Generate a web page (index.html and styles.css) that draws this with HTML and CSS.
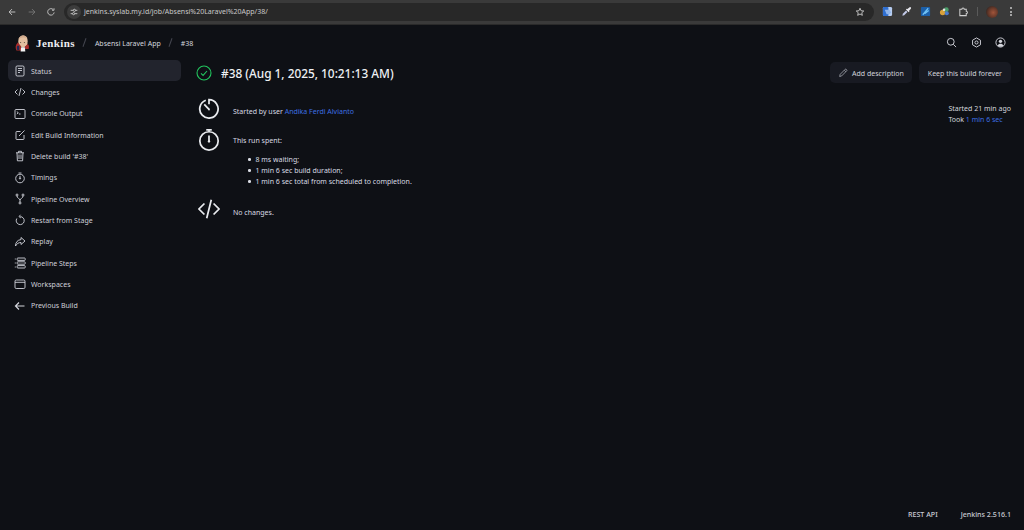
FILE: index.html
```html
<!DOCTYPE html>
<html lang="en">
<head>
<meta charset="utf-8">
<title>Jenkins #38</title>
<link rel="stylesheet" href="styles.css">
</head>
<body>
<div class="chrome">
  <div class="nav-icons">
    <svg class="cicon" viewBox="0 0 12 12"><path d="M10 6H2.500M6 2.500 2.500 6 6 9.500"/></svg>
    <svg class="cicon dim" viewBox="0 0 12 12"><path d="M2 6h7.500M6 2.500 9.500 6 6 9.500"/></svg>
    <svg class="cicon" viewBox="0 0 12 12"><path d="M9.800 6.500A3.900 3.900 0 1 1 8.600 3M9.600 1.500v2.400H7.200"/></svg>
  </div>
  <div class="omnibox">
    <span class="tune"><svg viewBox="0 0 12 12"><path d="M2 4h3M8 4h2M2 8h2M7 8h3"/><circle cx="6.500" cy="4" r="1.300"/><circle cx="5.500" cy="8" r="1.300"/></svg></span>
    <span class="url">jenkins.syslab.my.id/job/Absensi%20Laravel%20App/38/</span>
    <svg class="star" viewBox="0 0 12 12"><path d="m6 1.500 1.300 3 3.200.3-2.400 2.100.7 3.100L6 8.400 3.200 10l.7-3.100-2.400-2.100 3.200-.3z"/></svg>
  </div>
  <div class="extensions">
    <svg class="ext" viewBox="0 0 12 12"><rect x="1" y="1" width="10" height="10" rx="1.500" fill="#b7cdf0"/><rect x="1" y="1" width="6" height="10" rx="1" fill="#2f6fd0"/><path d="M3 4h5l2 3-2 2H5z" fill="#8fb4ea"/></svg>
    <svg class="ext" viewBox="0 0 12 12"><path d="M9.800 1.200a1.300 1.300 0 0 1 1 1.900L8.800 5.200l.4.900-.8.600-3-3 .7-.8.900.4z" fill="#e8e8ee"/><path d="M5.500 5 2 8.500 1.500 10.500l2-.5L7 6.500z" fill="#c2c9e8"/></svg>
    <svg class="ext" viewBox="0 0 12 12"><rect x="1" y="1" width="10" height="10" rx="1" fill="#1c5fa8"/><path d="M3 9.500 9 2.500M5 8.500 9.500 5" stroke="#6fc1f5" stroke-width="1.400" fill="none"/></svg>
    <svg class="ext" viewBox="0 0 12 12"><circle cx="4" cy="7" r="3" fill="#d9a23b"/><circle cx="8" cy="4" r="2.600" fill="#4b9d6a"/><circle cx="8.500" cy="8" r="2.200" fill="#4a7bd0"/><circle cx="5.500" cy="4" r="1.400" fill="#e6e6e6"/></svg>
    <svg class="ext puzzle" viewBox="0 0 12 12"><path d="M2 3.500h2.200a1.300 1.300 0 0 1 2.600 0H9v2.200a1.300 1.300 0 0 1 0 2.600V10.500H2z"/></svg>
    <span class="sep"></span>
    <span class="avatar"></span>
    <span class="kebab"><i></i><i></i><i></i></span>
  </div>
</div>

<div class="page">
  <header class="jenkins-head">
    <div class="brand">
      <svg class="logo" viewBox="0 0 16 18">
        <path d="M3.500 7.500C3.500 3.500 5.500 1 8.500 1s5 2.500 5 6-1 4.500-2 5.500-2.500 1.500-4 1-4-2-4-6z" fill="#e3bfa0"/>
        <path d="M4 4C5.500 1.800 7 .9 9 1c2.200.2 3.800 1.500 4.200 3C11 2.800 7 2.800 4 4.800z" fill="#cfa98c"/>
        <path d="M5.500 8.500h1M9.500 8.500h1" stroke="#4a3a30" stroke-width=".9"/>
        <path d="M1.500 17c-1.500-3-1-6 1.500-8.500l3 3.500 1 5z" fill="#a92c2b"/>
        <path d="M2.500 12c-.8 1.500-.6 3 0 4.500h2L4.500 12z" fill="#1e2a55"/>
        <path d="M14.500 15.500c.8-2.500.3-4.500-1-5.500L10.500 13l-.5 2.500z" fill="#a92c2b"/>
        <path d="M6.500 13.500h4l.5 4.500H6z" fill="#f2f2f2"/>
      </svg>
      <span class="brand-name">Jenkins</span>
    </div>
    <span class="slash"></span>
    <a class="crumb">Absensi Laravel App</a>
    <span class="slash"></span>
    <a class="crumb">#38</a>
    <div class="head-actions">
      <svg class="hicon" viewBox="0 0 12 12"><circle cx="5.200" cy="5.200" r="3.700"/><path d="m8 8 3 3"/></svg>
      <svg class="hicon" viewBox="0 0 12 12"><path d="M6 1 10.300 3.500v5L6 11 1.700 8.500v-5z" stroke-linejoin="round"/><circle cx="6" cy="6" r="1.700"/></svg>
      <svg class="hicon" viewBox="0 0 12 12"><circle cx="6" cy="6" r="5"/><circle cx="6" cy="4.700" r="1.800" class="solid"/><path class="solid" d="M2.800 9.200C3.500 7.800 4.700 7.300 6 7.300s2.500.5 3.200 1.900C8.400 10.200 7.200 10.700 6 10.700S3.600 10.200 2.800 9.200z"/></svg>
    </div>
  </header>

  <div class="layout">
    <nav class="sidebar">
      <a class="task active"><svg class="ticon" viewBox="0 0 12 12"><rect x="2" y="1" width="8" height="10" rx="1.200"/><path d="M4 3.500h4M4 5.500h4M4 7.500h2"/></svg>Status</a>
      <a class="task"><svg class="ticon" viewBox="0 0 12 12"><path d="M3.500 3.500 1 6l2.500 2.500M8.500 3.500 11 6 8.500 8.500M7 2 5 10"/></svg>Changes</a>
      <a class="task"><svg class="ticon" viewBox="0 0 12 12"><rect x="1" y="1.500" width="10" height="9" rx="1"/><path d="m2.800 3.600 1.500 1.200-1.500 1.200M5 6h1.500"/></svg>Console Output</a>
      <a class="task"><svg class="ticon" viewBox="0 0 12 12"><path d="M10 6v3.800a.7.700 0 0 1-.7.700H2.700a.7.700 0 0 1-.7-.7V3.200a.7.700 0 0 1 .7-.7H6.500M5 7l5.500-5.500"/></svg>Edit Build Information</a>
      <a class="task"><svg class="ticon" viewBox="0 0 12 12"><path d="M2 2.800h8M4.500 2.800V1.300h3v1.500M3 2.800l.4 8h5.200l.4-8M5 4.500v4.500M7 4.500v4.500"/></svg>Delete build '#38'</a>
      <a class="task"><svg class="ticon" viewBox="0 0 12 12"><circle cx="6" cy="6.500" r="4.300"/><path d="M4.500 1h3M6 3.800v2.700"/><circle cx="6" cy="6.500" r=".6"/></svg>Timings</a>
      <a class="task"><svg class="ticon" viewBox="0 0 12 12"><circle cx="3" cy="2" r="1"/><circle cx="9" cy="2" r="1"/><circle cx="6" cy="10" r="1"/><path d="M3 3c0 2.500 3 2.500 3 4v2M9 3c0 2.500-3 2.500-3 4"/></svg>Pipeline Overview</a>
      <a class="task"><svg class="ticon" viewBox="0 0 12 12"><path d="M6.300 2.600a4 4 0 1 1-3.500 1.900M6.500.8 5 2.600l1.800 1.300"/></svg>Restart from Stage</a>
      <a class="task"><svg class="ticon" viewBox="0 0 12 12"><path d="M7 1.500 11 5 7 8.500V6.500C4.500 6.500 3 7.500 1.500 10 1.500 6.500 3.500 3.800 7 3.600z" stroke-linejoin="round"/></svg>Replay</a>
      <a class="task"><svg class="ticon" viewBox="0 0 12 12"><path d="M.8 2h1M.8 6h1M.8 10h1"/><rect x="3.200" y="1" width="8" height="2.400" rx=".6"/><rect x="3.200" y="4.800" width="8" height="2.400" rx=".6"/><rect x="3.200" y="8.600" width="8" height="2.400" rx=".6"/></svg>Pipeline Steps</a>
      <a class="task"><svg class="ticon" viewBox="0 0 12 12"><rect x="1" y="2" width="10" height="8.500" rx="1.200"/><path d="M1 4.300h10"/></svg>Workspaces</a>
      <a class="task"><svg class="ticon thick" viewBox="0 0 12 12"><path d="M10.500 6h-9M5 2.500 1.500 6 5 9.500"/></svg>Previous Build</a>
    </nav>

    <main class="content">
      <div class="title-row">
        <svg class="status-icon" viewBox="0 0 16 16"><circle cx="8" cy="8" r="7"/><path d="m5 8.300 2.100 2.100L11 6"/></svg>
        <h1>#38 (Aug 1, 2025, 10:21:13 AM)</h1>
        <div class="title-actions">
          <a class="btn btn-add"><svg class="pencil" viewBox="0 0 12 12"><path d="M2 10.200 2.600 7.600 8.600 1.600a.9.900 0 0 1 1.300 0l.5.500a.9.900 0 0 1 0 1.300L4.400 9.500zM7.600 2.700l1.700 1.700"/></svg>Add description</a>
          <a class="btn">Keep this build forever</a>
        </div>
      </div>

      <div class="summary-wrap">
        <div class="summary">
          <div class="row row-start">
            <svg class="big-icon" viewBox="0 0 24 24"><path d="M8.500 2.500a10 10 0 1 0 3.500-.6v5"/><path d="M6.800 7 12 12.500" /><circle cx="12" cy="12.500" r="1" class="dot"/></svg>
            <p>Started by user <a class="link">Andika Ferdi Alvianto</a></p>
          </div>
          <div class="row row-run">
            <svg class="big-icon" viewBox="0 0 24 24"><circle cx="12" cy="13" r="10"/><path d="M9 1h6M12 1v2M12 7v6"/><circle cx="12" cy="13.500" r="1.300" class="dot"/></svg>
            <div class="run">
              <p>This run spent:</p>
              <ul>
                <li>8 ms waiting;</li>
                <li>1 min 6 sec build duration;</li>
                <li>1 min 6 sec total from scheduled to completion.</li>
              </ul>
            </div>
          </div>
          <div class="row row-changes">
            <svg class="big-icon" viewBox="0 0 24 24"><path d="M7 6 1 12l6 6M17 6l6 6-6 6M14.500 2 9.500 22"/></svg>
            <p>No changes.</p>
          </div>
        </div>
        <div class="timing">
          <p>Started 21 min ago</p>
          <p>Took <a class="link">1 min 6 sec</a></p>
        </div>
      </div>
    </main>
  </div>

  <footer class="foot">
    <a>REST API</a>
    <a>Jenkins 2.516.1</a>
  </footer>
</div>
</body>
</html>
```

FILE: styles.css
```css
* { box-sizing: border-box; }
html, body { margin: 0; height: 100%; }
body {
  width: 1024px;
  height: 530px;
  overflow: hidden;
  background: #0e1015;
  color: #d9dbe3;
  font-family: "Noto Sans", "Open Sans", sans-serif;
  font-size: 7px;
  display: flex;
  flex-direction: column;
}
p { margin: 0; }
a { color: inherit; text-decoration: none; }

.chrome {
  height: 25px;
  flex: none;
  background: #3a3a3a;
  border-bottom: 1px solid #2a2a2a;
  display: flex;
  align-items: center;
  padding: 0 8px 1px 7px;
}
.nav-icons { display: flex; gap: 9.5px; width: 57px; flex: none; }
.cicon { width: 10px; height: 10px; fill: none; stroke: #c7c7c7; stroke-width: 1.1; }
.cicon.dim { stroke: #777; }
.omnibox {
  width: 810px;
  height: 18px;
  flex: none;
  background: #282828;
  border-radius: 9px;
  display: flex;
  align-items: center;
  padding: 0 9px 0 3px;
}
.tune {
  width: 14px;
  height: 14px;
  border-radius: 50%;
  background: #3c3c3c;
  display: flex;
  align-items: center;
  justify-content: center;
  margin-right: 3px;
}
.tune svg { width: 10px; height: 10px; fill: none; stroke: #d5d5d5; stroke-width: 1; }
.url { color: #c9c9c9; flex: 1; }
.star { width: 10px; height: 10px; fill: none; stroke: #d8d8d8; stroke-width: 1; }
.extensions { display: flex; align-items: center; flex: 1; padding-left: 8px; }
.ext { width: 11px; height: 11px; margin-right: 8px; flex: none; }
.puzzle { fill: none; stroke: #d0d0d0; stroke-width: 1.1; margin-right: 8px; }
.sep { width: 1px; height: 9px; background: #5a5a5a; margin-right: 8px; flex: none; }
.avatar {
  width: 12px;
  height: 12px;
  border-radius: 50%;
  background: radial-gradient(circle at 60% 55%, #a0543a 0, #6a3a2a 45%, #2c2320 85%);
  margin-right: 12px;
  flex: none;
}
.kebab { display: flex; flex-direction: column; gap: 1.5px; }
.kebab i { display: block; width: 2px; height: 2px; border-radius: 50%; background: #c8c8c8; }

.page { flex: 1; display: flex; flex-direction: column; min-height: 0; }

.jenkins-head {
  height: 35px;
  flex: none;
  display: flex;
  align-items: center;
  padding: 0 18px 0 15px;
}
.brand { display: flex; align-items: center; gap: 7px; }
.logo { width: 15px; height: 18px; }
.brand-name {
  font-family: "Liberation Serif", serif;
  font-weight: 700;
  font-size: 11px;
  letter-spacing: .4px;
  color: #eceef2;
  margin-left: -1px;
}
.slash {
  width: 1px;
  height: 9px;
  background: #444650;
  transform: rotate(20deg);
  margin: 0 9.5px;
}
.crumb { color: #d4d6de; padding-top: 1px; }
.head-actions { margin-left: auto; display: flex; gap: 13.5px; align-items: center; }
.hicon { width: 11px; height: 11px; fill: none; stroke: #d6d8df; stroke-width: 1; }
.hicon .solid { fill: #d6d8df; stroke: none; }

.layout { flex: 1; display: flex; min-height: 0; }

.sidebar {
  width: 173px;
  margin-left: 8px;
  flex: none;
  display: flex;
  flex-direction: column;
}
.task {
  height: 21.33px;
  flex: none;
  display: flex;
  align-items: center;
  gap: 5px;
  padding: 1px 0 0 6px;
  border-radius: 5px;
  color: #cfd1da;
}
.task.active { background: #22242d; }
.ticon { width: 12px; height: 12px; flex: none; fill: none; stroke: #d3d5dc; stroke-width: .9; }
.ticon.thick { stroke-width: 1.2; }

.content { flex: 1; padding: 2px 13px 0 15px; min-width: 0; }

.title-row { height: 21px; display: flex; align-items: center; }
.status-icon { width: 16px; height: 16px; flex: none; fill: none; stroke: #22c55e; stroke-width: 1.1; margin-right: 9px; }
h1 { margin: 0; font-size: 11.85px; font-weight: 500; color: #eef0f4; }
.title-actions { margin-left: auto; display: flex; gap: 7px; }
.btn {
  height: 21px;
  display: flex;
  align-items: center;
  gap: 4px;
  padding: 1px 9px 0;
  background: #181a22;
  border-radius: 5px;
  color: #d2d4dc;
}
.btn-add { padding: 1px 8px 0; }
.pencil { width: 10px; height: 10px; fill: none; stroke: #b0b2ba; stroke-width: .9; }

.summary-wrap { display: flex; justify-content: space-between; padding-top: 14px; }
.big-icon { width: 22px; height: 22px; flex: none; fill: none; stroke: #e9ebef; stroke-width: 1.9; margin: 0 13px 0 2px; }
.big-icon .dot { fill: #e9ebef; stroke: none; }
.row { display: flex; align-items: center; }
.row-start { height: 24px; }
.row-start p { padding-top: 4px; }
.row-changes p { padding-top: 6px; }
.row-run { align-items: flex-start; margin-top: 8px; }
.run > p { padding-top: 7px; }
.run ul { margin: 9px 0 0; padding: 0 0 0 15px; line-height: 11px; list-style: none; }
.run li { display: flex; align-items: center; gap: 5px; }
.run li::before { content: ""; width: 2.5px; height: 2.5px; border-radius: 50%; background: #d9dbe3; flex: none; }
.row-changes { margin-top: 10px; height: 24px; }
.link { color: #3d6fe0; }
.timing { line-height: 11px; padding-top: 6px; color: #d4d6de; }

.foot {
  height: 21px;
  flex: none;
  display: flex;
  justify-content: flex-end;
  gap: 23px;
  padding: 0 13px 0 0;
  align-items: flex-start;
  color: #c9cbd3;
  font-weight: 500;
  font-size: 7.1px;
}
```
